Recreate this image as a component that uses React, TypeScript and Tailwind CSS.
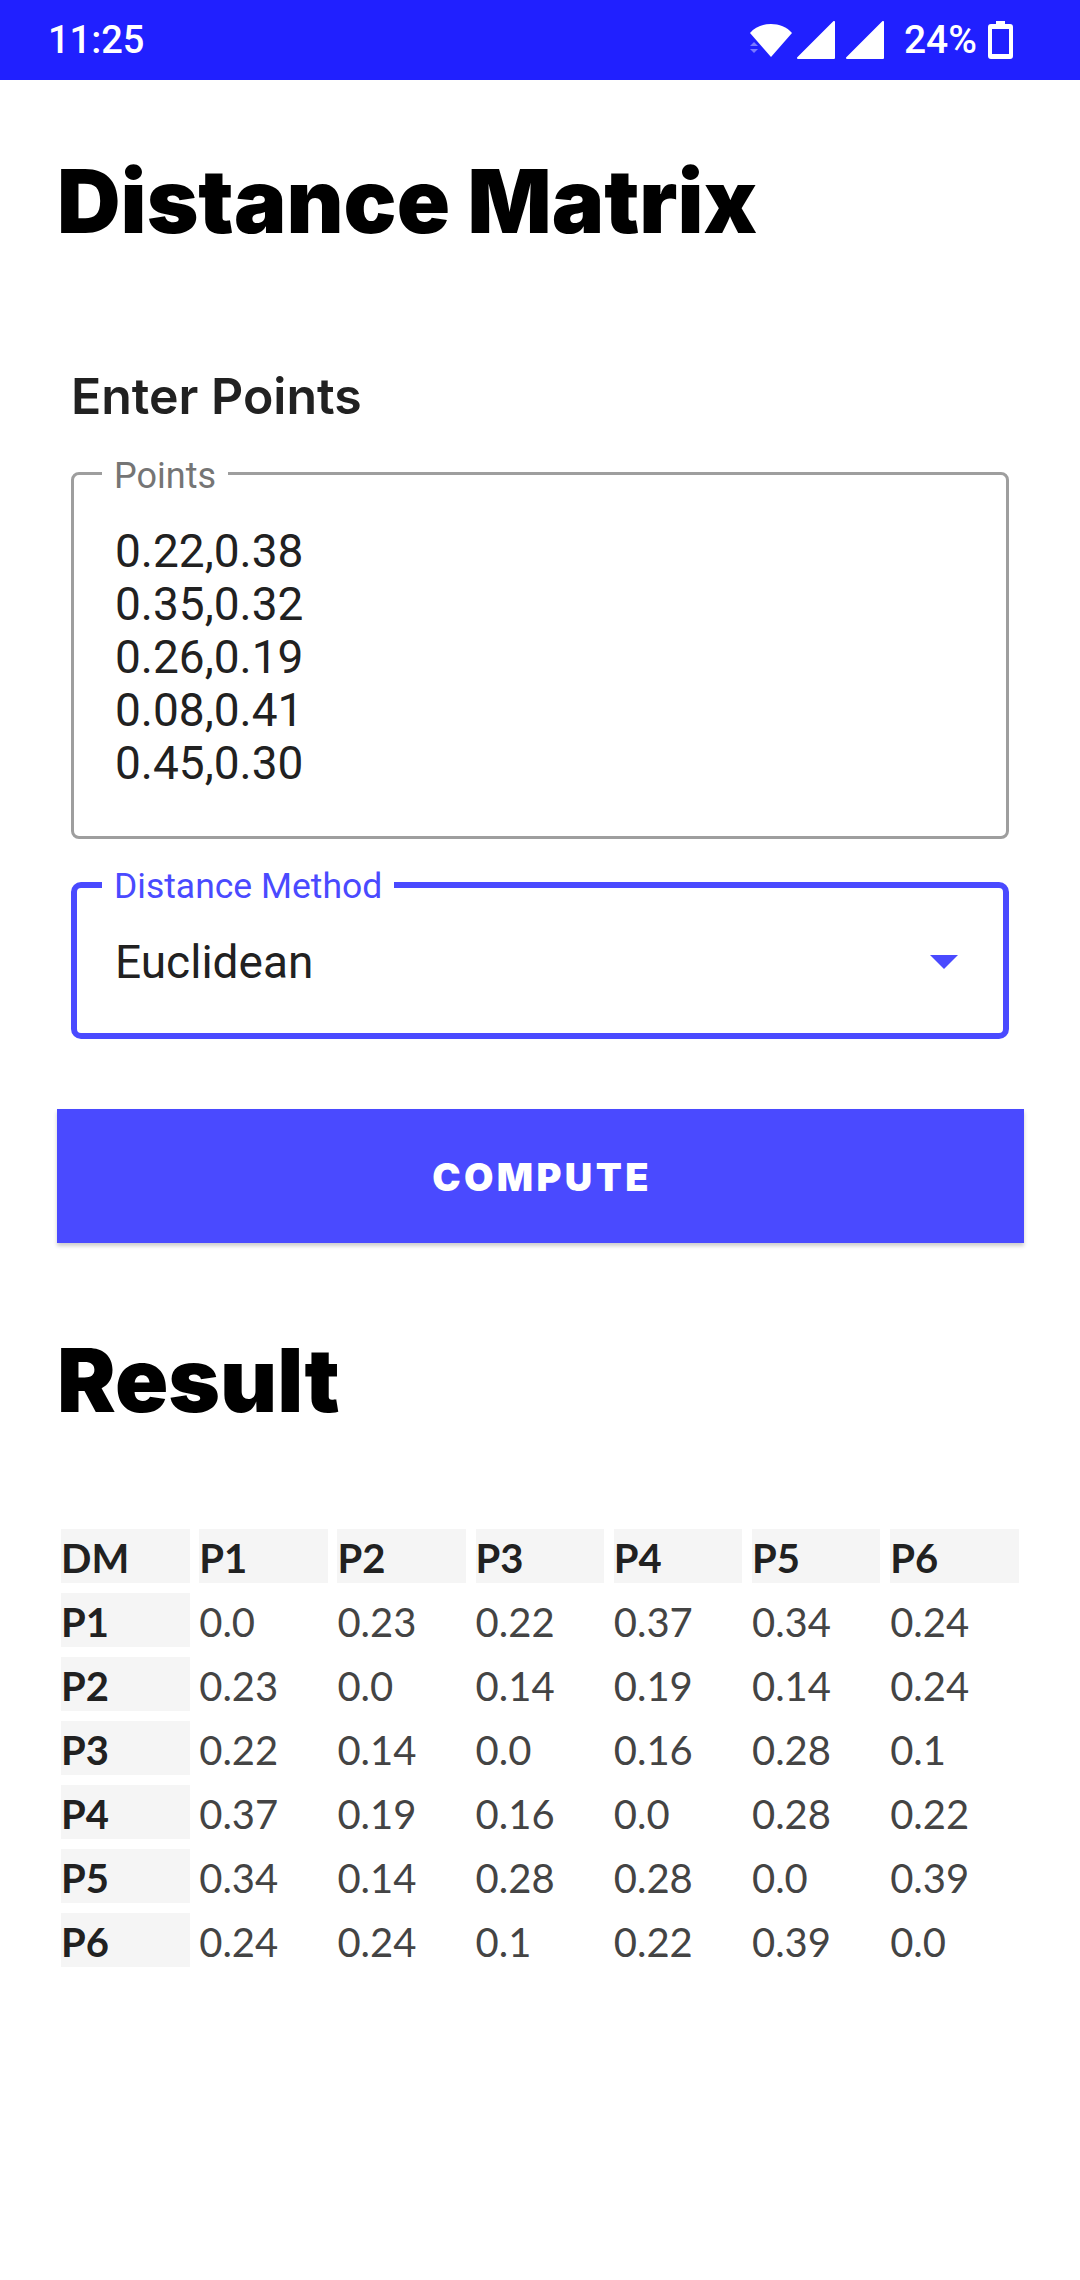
const DATA = [
  ["0.0", "0.23", "0.22", "0.37", "0.34", "0.24"],
  ["0.23", "0.0", "0.14", "0.19", "0.14", "0.24"],
  ["0.22", "0.14", "0.0", "0.16", "0.28", "0.1"],
  ["0.37", "0.19", "0.16", "0.0", "0.28", "0.22"],
  ["0.34", "0.14", "0.28", "0.28", "0.0", "0.39"],
  ["0.24", "0.24", "0.1", "0.22", "0.39", "0.0"],
];
const HEAD = ["DM", "P1", "P2", "P3", "P4", "P5", "P6"];
const POINTS = ["0.22,0.38", "0.35,0.32", "0.26,0.19", "0.08,0.41", "0.45,0.30"];

function StatusBar() {
  return (
    <div className="flex h-[80px] items-center justify-between bg-[#2020ff] pl-[48px] pr-[67px] text-white">
      <span className="font-['Roboto',sans-serif] text-[38px] font-medium leading-none">11:25</span>
      <div className="flex items-center">
        <svg width="42" height="36" viewBox="0 0 42 36">
          <path d="M0 11C5 5 13 2 21 2s16 3 21 9L21 35z" fill="#fff" />
          <path d="M0 24l4-4 4 4zM0 27l4 4 4-4z" fill="#2020ff" />
          <path d="M0 24l4-4 4 4zM0 27l4 4 4-4z" fill="#fff" fillOpacity="0.4" />
        </svg>
        <svg width="38" height="38" viewBox="0 0 38 38" className="ml-[5px]"><path d="M37 1v36H1z" fill="#fff" stroke="#fff" strokeWidth="2" strokeLinejoin="round" /></svg>
        <svg width="38" height="38" viewBox="0 0 38 38" className="ml-[11px]"><path d="M37 1v36H1z" fill="#fff" stroke="#fff" strokeWidth="2" strokeLinejoin="round" /></svg>
        <span className="ml-[20px] font-['Roboto',sans-serif] text-[39px] font-medium leading-none">24%</span>
        <svg width="25" height="38" viewBox="0 0 25 38" className="ml-[11px]">
          <path d="M8 0h9v3h5a3 3 0 0 1 3 3v29a3 3 0 0 1-3 3H3a3 3 0 0 1-3-3V6a3 3 0 0 1 3-3h5zM4 8v25h17V8z" fill="#fff" fillRule="evenodd" />
        </svg>
      </div>
    </div>
  );
}

function PointsField() {
  return (
    <div className="relative h-[367px] rounded-[8px] border-[3px] border-[#9e9e9e] pl-[41px] pt-[50px]">
      <span className="absolute left-[28px] top-[-17px] bg-white px-[12px] font-['Roboto',sans-serif] text-[36px] leading-[36px] text-[#757575]">Points</span>
      <div className="font-['Roboto',sans-serif] text-[46px] leading-[53px] text-[#212121]">
        {POINTS.map((p) => (
          <div key={p}>{p}</div>
        ))}
      </div>
    </div>
  );
}

function MethodField() {
  return (
    <div className="relative mt-[43px] flex h-[157px] items-center justify-between rounded-[10px] border-[6px] border-[#4a4aff] pl-[38px] pr-[45px]">
      <span className="absolute left-[25px] top-[-20px] bg-white px-[12px] font-['Roboto',sans-serif] text-[35.5px] leading-[36px] text-[#4a4aff]">Distance Method</span>
      <span className="pt-[3px] font-['Roboto',sans-serif] text-[46px] text-[#212121]">Euclidean</span>
      <svg width="28" height="14" viewBox="0 0 28 14" className="mt-[2px]"><path d="M0 0h28L14 14z" fill="#4a4aff" /></svg>
    </div>
  );
}

function ResultTable() {
  return (
    <div className="mt-[93px] ml-[4px] grid grid-cols-[128.5px_128.5px_128.5px_128.5px_128.5px_128.5px_128.5px] gap-x-[9.7px] gap-y-[10px] font-['Lato',sans-serif] text-[40px] leading-[58px] text-[#212121]">
      {HEAD.map((h) => (
        <div key={h} className="h-[54px] bg-[#f5f5f5] font-bold">{h}</div>
      ))}
      {DATA.map((row, i) => [
        <div key={`h${i}`} className="h-[54px] bg-[#f5f5f5] font-bold">{HEAD[i + 1]}</div>,
        ...row.map((v, j) => <div key={`${i}-${j}`} className="h-[54px] font-normal text-[#444444]">{v}</div>),
      ])}
    </div>
  );
}

export default function App() {
  return (
    <div className="h-[2280px] w-[1080px] overflow-hidden bg-white">
      <StatusBar />
      <div className="px-[57px]">
        <h1 className="mt-[65px] font-['Inter',sans-serif] text-[88px] font-black leading-[112px] text-black">Distance Matrix</h1>
        <div className="mt-[111px] px-[14px]">
          <h2 className="mb-[48px] font-['Inter',sans-serif] text-[50px] font-semibold leading-[56px] text-[#212121]">Enter Points</h2>
          <PointsField />
          <MethodField />
        </div>
        <button className="mt-[70px] flex h-[134px] w-[967px] items-center justify-center bg-[#4a4aff] pl-[3px] pt-[2px] font-['Inter',sans-serif] text-[38px] font-black tracking-[3.4px] text-white shadow-[0_3px_4px_rgba(0,0,0,0.2)]">COMPUTE</button>
        <h1 className="mt-[81px] font-['Inter',sans-serif] text-[88px] font-black leading-[112px] text-black">Result</h1>
        <ResultTable />
      </div>
    </div>
  );
}
